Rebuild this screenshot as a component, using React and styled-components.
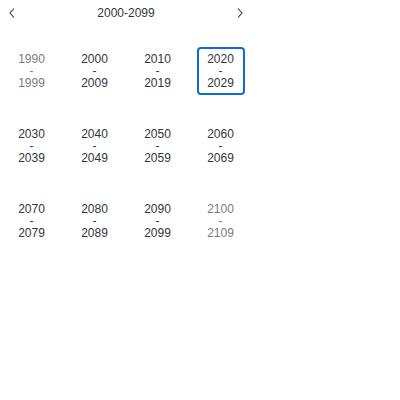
import React from 'react';
import styled, { createGlobalStyle } from 'styled-components';

const GlobalStyle = createGlobalStyle`
  html, body {
    margin: 0;
    background: #ffffff;
    font-family: "Liberation Sans", Arial, sans-serif;
  }
`;

const Picker = styled.div`
  width: 252px;
`;

const Header = styled.div`
  height: 25px;
  display: flex;
  align-items: center;
  justify-content: space-between;
`;

const NavButton = styled.button`
  width: 24px;
  height: 25px;
  padding: 0;
  border: none;
  background: none;
  display: flex;
  align-items: center;
  justify-content: center;
  color: #32363a;
  cursor: pointer;
`;

const Title = styled.div`
  font-size: 12px;
  color: #32363a;
`;

const Grid = styled.div`
  margin-top: 8px;
  display: grid;
  grid-template-columns: repeat(4, 1fr);
  grid-auto-rows: 75px;
`;

const Cell = styled.div`
  display: flex;
  align-items: center;
  justify-content: center;
`;

const Range = styled.div`
  width: 48px;
  height: 48px;
  box-sizing: border-box;
  display: flex;
  flex-direction: column;
  align-items: center;
  justify-content: center;
  font-size: 12px;
  line-height: 12px;
  color: ${(p) => (p.$outside ? '#7a7a7a' : '#32363a')};
  border: 2px solid ${(p) => (p.$selected ? '#0a6ed1' : 'transparent')};
  border-radius: 4px;
`;

const Chevron = ({ dir }) => (
  <svg width="8" height="12" viewBox="0 0 8 12">
    <path
      d={dir === 'left' ? 'M6 1.5 L2 6 L6 10.5' : 'M2 1.5 L6 6 L2 10.5'}
      fill="none"
      stroke="currentColor"
      strokeWidth="1.1"
    />
  </svg>
);

const starts = [1990, 2000, 2010, 2020, 2030, 2040, 2050, 2060, 2070, 2080, 2090, 2100];

export default function App() {
  return (
    <>
      <GlobalStyle />
      <Picker>
        <Header>
          <NavButton aria-label="previous">
            <Chevron dir="left" />
          </NavButton>
          <Title>2000-2099</Title>
          <NavButton aria-label="next">
            <Chevron dir="right" />
          </NavButton>
        </Header>
        <Grid>
          {starts.map((y) => (
            <Cell key={y}>
              <Range $outside={y < 2000 || y > 2090} $selected={y === 2020}>
                <span>{y}</span>
                <span>-</span>
                <span>{y + 9}</span>
              </Range>
            </Cell>
          ))}
        </Grid>
      </Picker>
    </>
  );
}
